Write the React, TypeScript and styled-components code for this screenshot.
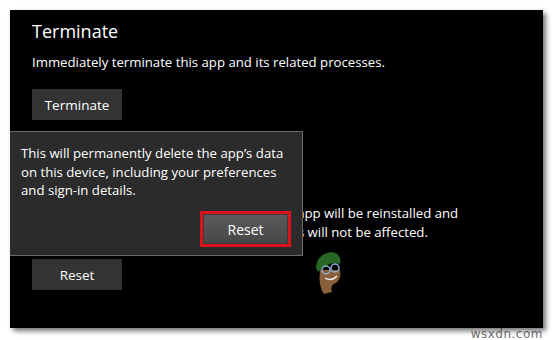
import React from "react";
import styled, { createGlobalStyle } from "styled-components";

const Global = createGlobalStyle`
  html, body { margin: 0; padding: 0; background: #ffffff; }
  body { font-family: "Open Sans", "Noto Sans", sans-serif; }
`;

const Page = styled.div`
  width: 554px;
  height: 340px;
  padding: 10px 0 0 10px;
  box-sizing: border-box;
  position: relative;
  overflow: hidden;
`;

const Panel = styled.div`
  position: relative;
  z-index: 1;
  width: 533px;
  height: 318px;
  background: #000;
  box-shadow: 3px 3px 5px rgba(0, 0, 0, 0.55);
  box-sizing: border-box;
  padding: 8px 22px 0 22px;
  display: flex;
  flex-direction: column;
  color: #fff;
`;

const Section = styled.section<{ $gap?: number }>`
  display: flex;
  flex-direction: column;
  align-items: flex-start;
  margin-top: ${(p) => p.$gap ?? 0}px;
`;

const Title = styled.h2`
  margin: 0;
  font-size: 18px;
  font-weight: 400;
  line-height: 26px;
  color: #fff;
`;

const Desc = styled.p`
  margin: 9px 0 0 0;
  font-size: 13.2px;
  line-height: 19px;
  color: #fff;
  white-space: nowrap;
`;

const Button = styled.div`
  margin-top: 17px;
  width: 90px;
  height: 31px;
  background: #333333;
  color: #fff;
  font-size: 13.5px;
  display: flex;
  align-items: center;
  justify-content: center;
`;

const Dialog = styled.div`
  position: absolute;
  left: 0;
  top: 121px;
  width: 293px;
  height: 125px;
  box-sizing: border-box;
  background: #2b2b2b;
  border: 1px solid #6a6a6a;
  border-left: none;
  padding: 12px 11px 8px 11px;
  display: flex;
  flex-direction: column;
  justify-content: space-between;
  z-index: 2;
`;

const DialogText = styled.p`
  margin: 0;
  font-size: 13.2px;
  line-height: 18.5px;
  color: #fff;
`;

const DialogFooter = styled.div`
  display: flex;
  justify-content: flex-end;
`;

const Highlight = styled.div`
  border: 3px solid #d9121b;
  width: 91px;
  height: 36px;
  box-sizing: border-box;
`;

const DialogButton = styled.div`
  width: 100%;
  height: 100%;
  background: linear-gradient(#5c5c5c, #464646);
  box-shadow: inset 0 0 0 1px #3a3a3a;
  color: #fff;
  font-size: 14px;
  display: flex;
  align-items: center;
  justify-content: center;
`;

const Mascot = styled.svg`
  position: absolute;
  left: 300px;
  top: 236px;
  width: 36px;
  height: 50px;
`;

const Watermark = styled.div`
  position: absolute;
  right: 11px;
  bottom: -1px;
  font-family: "DejaVu Sans", sans-serif;
  font-size: 12px;
  color: #777;
  z-index: 0;
  letter-spacing: 0.5px;
`;

export default function App() {
  return (
    <>
      <Global />
      <Page>
        <Panel>
          <Section>
            <Title>Terminate</Title>
            <Desc>Immediately terminate this app and its related processes.</Desc>
            <Button>Terminate</Button>
          </Section>
          <Section $gap={49}>
            <Title>Reset</Title>
            <Desc>
              If this app is not working right, reset it. The app will be reinstalled and
              <br />
              your documents, pictures and other settings will not be affected.
            </Desc>
            <Button>Reset</Button>
          </Section>
          <Dialog>
            <DialogText>
              This will permanently delete the app’s data on this device, including your preferences
              and sign-in details.
            </DialogText>
            <DialogFooter>
              <Highlight>
                <DialogButton>Reset</DialogButton>
              </Highlight>
            </DialogFooter>
          </Dialog>
          <Mascot viewBox="0 0 36 50">
            <path d="M10 24 Q8 40 14 48 L22 46 Q20 40 24 38 Q32 34 30 24 Z" fill="#a07040" opacity="0.85" />
            <path d="M6 22 Q6 8 22 6 Q32 8 30 18 Q20 14 8 26 Z" fill="#2f7a2a" opacity="0.85" />
            <circle cx="16" cy="24" r="4" fill="none" stroke="#8fb0d8" strokeWidth="1.5" />
            <circle cx="25" cy="22" r="4" fill="none" stroke="#8fb0d8" strokeWidth="1.5" />
            <path d="M15 32 Q21 36 27 30" fill="none" stroke="#eee" strokeWidth="1.5" />
          </Mascot>
        </Panel>
        <Watermark>wsxdn.com</Watermark>
      </Page>
    </>
  );
}
